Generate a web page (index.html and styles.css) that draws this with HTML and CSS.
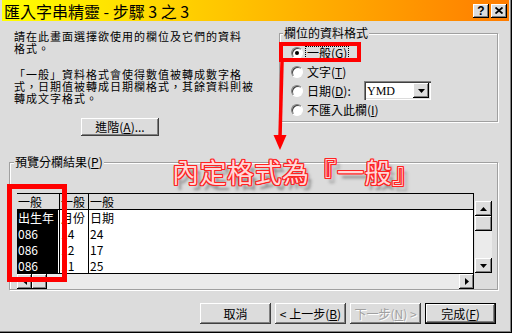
FILE: index.html
```html
<!DOCTYPE html>
<html lang="zh-Hant">
<head>
    <meta charset="UTF-8">
    <title>匯入字串精靈 - 步驟 3 之 3</title>
    <link rel="stylesheet" href="styles.css">
</head>
<body>
    <div class="window">
        <div class="titlebar">
            <span class="title">匯入字串精靈 - 步驟 3 之 3</span>
            <div class="title-buttons">
                <span class="tbtn help">?</span>
                <span class="tbtn">
                    <svg width="8" height="7" viewBox="0 0 8 7"><path d="M0.5 0.5 L7.5 6.5 M7.5 0.5 L0.5 6.5" stroke="#000" stroke-width="1.8"/></svg>
                </span>
            </div>
        </div>

        <div class="content">
            <div class="top">
                <div class="intro">
                    <p>請在此畫面選擇欲使用的欄位及它們的資料<br>格式。</p>
                    <p class="para">「一般」資料格式會使得數值被轉成數字格<br>式，日期值被轉成日期欄格式，其餘資料則被<br>轉成文字格式。</p>
                    <button class="btn advanced">進階(<u>A</u>)...</button>
                </div>

                <fieldset class="group format">
                    <legend>欄位的資料格式</legend>
                    <div class="radio-row">
                        <span class="radio checked"></span>
                        <span class="label focus">一般(<u>G</u>)</span>
                    </div>
                    <div class="radio-row">
                        <span class="radio"></span>
                        <span class="label">文字(<u>T</u>)</span>
                    </div>
                    <div class="radio-row">
                        <span class="radio"></span>
                        <span class="label date">日期(<u>D</u>):</span>
                        <div class="combo">
                            <span class="combo-text">YMD</span>
                            <span class="combo-btn">
                                <svg width="7" height="4" viewBox="0 0 7 4"><polygon points="0,0 7,0 3.5,4" fill="#000"/></svg>
                            </span>
                        </div>
                    </div>
                    <div class="radio-row">
                        <span class="radio"></span>
                        <span class="label">不匯入此欄(<u>I</u>)</span>
                    </div>
                </fieldset>
            </div>

            <fieldset class="group preview">
                <legend>預覽分欄結果(<u>P</u>)</legend>
                <div class="preview-box">
                    <div class="grid">
                        <div class="grid-head">
                            <div class="cell c1">一般</div>
                            <div class="cell c2">一般</div>
                            <div class="cell c3">一般</div>
                        </div>
                        <div class="grid-body">
                            <div class="row">
                                <div class="cell c1 sel">出生年</div>
                                <div class="cell c2">月份</div>
                                <div class="cell c3">日期</div>
                            </div>
                            <div class="row">
                                <div class="cell c1 sel">086</div>
                                <div class="cell c2">14</div>
                                <div class="cell c3">24</div>
                            </div>
                            <div class="row">
                                <div class="cell c1 sel">086</div>
                                <div class="cell c2">12</div>
                                <div class="cell c3">17</div>
                            </div>
                            <div class="row">
                                <div class="cell c1 sel">086</div>
                                <div class="cell c2">11</div>
                                <div class="cell c3">25</div>
                            </div>
                        </div>
                        <div class="hscroll">
                            <span class="sbtn hbtn">
                                <svg width="4" height="7" viewBox="0 0 4 7"><polygon points="4,0 4,7 0,3.5" fill="#000"/></svg>
                            </span>
                            <span class="sbtn hbtn"></span>
                            <span class="track"></span>
                            <span class="sbtn hbtn">
                                <svg width="4" height="7" viewBox="0 0 4 7"><polygon points="0,0 0,7 4,3.5" fill="#000"/></svg>
                            </span>
                        </div>
                    </div>
                    <div class="vscroll">
                        <span class="sbtn vbtn">
                            <svg width="7" height="4" viewBox="0 0 7 4"><polygon points="0,4 7,4 3.5,0" fill="#000"/></svg>
                        </span>
                        <span class="sbtn vbtn"></span>
                        <span class="track"></span>
                        <span class="sbtn vbtn">
                            <svg width="7" height="4" viewBox="0 0 7 4"><polygon points="0,0 7,0 3.5,4" fill="#000"/></svg>
                        </span>
                    </div>
                </div>
            </fieldset>

            <div class="actions">
                <button class="btn">取消</button>
                <button class="btn">&lt; 上一步(<u>B</u>)</button>
                <button class="btn disabled">下一步(<u>N</u>) &gt;</button>
                <button class="btn default">完成(<u>F</u>)</button>
            </div>
        </div>

        <!-- red annotation marks -->
        <svg class="marks" width="512" height="333" viewBox="0 0 512 333">
            <rect x="281" y="44" width="78" height="16" fill="none" stroke="#ff0000" stroke-width="4"/>
            <line x1="282" y1="62" x2="280" y2="137" stroke="#ff0000" stroke-width="3.5"/>
            <polygon points="273.5,135 286.5,135 280,150" fill="#ff0000"/>
            <rect x="9.5" y="186.5" width="55" height="93" fill="none" stroke="#ff0000" stroke-width="5"/>
        </svg>
        <div class="callout">內定格式為『一般』</div>
    </div>
</body>
</html>
```

FILE: styles.css
```css
* {
    margin: 0;
    padding: 0;
    box-sizing: border-box;
}

body {
    font-family: "Noto Sans CJK TC", "Liberation Sans", sans-serif;
    font-size: 12px;
    line-height: 12px;
    color: #000;
    background: #fff;
}

.window {
    position: relative;
    width: 512px;
    height: 333px;
    background: #dcdcdc;
    box-shadow: inset -1px -1px #000, inset -2px -2px #808080;
    overflow: hidden;
}

/* title bar */
.titlebar {
    display: flex;
    align-items: center;
    height: 21px;
    margin: 0 3px 0 2px;
    padding: 0 2px;
    background: linear-gradient(to right, #ffff00, #ff7c00);
}

.title {
    font-size: 16px;
    line-height: 16px;
}

.title-buttons {
    margin-left: auto;
    display: flex;
    gap: 2px;
}

.tbtn {
    width: 16px;
    height: 14px;
    display: flex;
    align-items: center;
    justify-content: center;
    background: #dcdcdc;
    box-shadow: inset -1px -1px #000, inset 1px 1px #fff, inset -2px -2px #808080;
}

.tbtn.help {
    font-family: "Liberation Sans", sans-serif;
    font-weight: bold;
    font-size: 12px;
}

/* main area */
.content {
    padding: 6px 14px 0 9px;
}

.top {
    display: flex;
    align-items: flex-start;
}

.intro {
    width: 270px;
    padding: 3px 0 0 5px;
}

.intro p {
    font-size: 11px;
    letter-spacing: 1px;
    line-height: 12px;
}

.intro .para {
    margin-top: 14px;
}

.btn {
    font: inherit;
    color: #000;
    width: 71px;
    height: 21px;
    border: none;
    background: #dcdcdc;
    box-shadow: inset -1px -1px #404040, inset 1px 1px #fff, inset -2px -2px #808080;
}

.btn.advanced {
    display: block;
    width: 78px;
    height: 18px;
    margin: 14px 0 0 67px;
}

.btn.default {
    border: 1px solid #000;
}

.btn.disabled {
    color: #a0a0a0;
    text-shadow: 1px 1px #fff;
}

/* group boxes */
.group {
    min-width: 0;
    padding: 0;
    border: 1px solid #a0a0a0;
    box-shadow: inset 1px 1px #fff, 1px 1px #fff;
}

.group legend {
    padding: 0 1px;
    background: #dcdcdc;
    line-height: 12px;
}

.format {
    flex: 1;
    padding: 4px 0 2px 0;
}

.format legend {
    margin-left: 3px;
}

.radio-row {
    display: flex;
    align-items: center;
    height: 19px;
    padding-left: 11px;
}

.radio {
    width: 12px;
    height: 12px;
    border-radius: 50%;
    background: #fff;
    border: 1px solid;
    border-color: #808080 #fff #fff #808080;
    box-shadow: inset 1px 1px #404040;
    display: flex;
    align-items: center;
    justify-content: center;
}

.radio.checked::after {
    content: "";
    width: 4px;
    height: 4px;
    border-radius: 50%;
    background: #000;
}

.label {
    margin-left: 4px;
}

.label.focus {
    margin-left: 2px;
    padding: 0 1px;
    border: 1px dotted #000;
    line-height: 11px;
}

.label.date {
    width: 57px;
}

.combo {
    display: flex;
    width: 67px;
    height: 19px;
    background: #fff;
    box-shadow: inset 1px 1px #808080, inset 2px 2px #404040, inset -1px -1px #fff, inset -2px -2px #dcdcdc;
}

.combo-text {
    flex: 1;
    padding: 4px 0 0 3px;
    font-family: "Liberation Serif", serif;
    font-size: 12px;
}

.combo-btn {
    width: 16px;
    height: 15px;
    margin: 2px 2px 2px 0;
    display: flex;
    align-items: center;
    justify-content: center;
    background: #dcdcdc;
    box-shadow: inset -1px -1px #000, inset 1px 1px #fff, inset -2px -2px #808080;
}

/* preview */
.preview {
    margin-top: 20px;
    padding-top: 25px;
}

.preview legend {
    margin-left: 4px;
}

.preview-box {
    display: flex;
    align-items: flex-start;
    margin-left: 7px;
}

.grid {
    width: 457px;
}

.grid-head {
    display: flex;
    height: 17px;
    border-top: 1px solid #000;
    border-bottom: 1px solid #000;
    border-right: 1px solid #000;
}

.grid-body {
    height: 64px;
    overflow: hidden;
    background: #fff;
    border-right: 1px solid #000;
    border-bottom: 1px solid #000;
}

.row {
    display: flex;
    height: 16px;
    align-items: center;
}

.cell {
    padding-left: 1px;
    white-space: nowrap;
}

.grid-head .cell {
    height: 15px;
    padding-top: 2px;
}

.c1 {
    width: 43px;
    border-right: 1px solid #000;
}

.c2 {
    width: 29px;
    border-right: 1px solid #000;
}

.c3 {
    flex: 1;
}

.cell.sel {
    height: 16px;
    padding-top: 2px;
    color: #fff;
    background: #000;
    box-shadow: inset -1px 0 #fff;
}

.row .c2,
.row .c3 {
    height: 16px;
    padding-top: 2px;
}

.hscroll {
    display: flex;
    height: 15px;
    background: #ebebeb;
}

.vscroll {
    display: flex;
    flex-direction: column;
    width: 17px;
    height: 72px;
    margin: 8px 0 0 1px;
    background: #ebebeb;
}

.sbtn {
    display: flex;
    align-items: center;
    justify-content: center;
    background: #dcdcdc;
    box-shadow: inset -1px -1px #000, inset 1px 1px #fff, inset -2px -2px #808080;
}

.hbtn {
    width: 15px;
    height: 15px;
}

.vbtn {
    width: 17px;
    height: 15px;
}

.track {
    flex: 1;
}

/* bottom buttons */
.actions {
    display: flex;
    justify-content: flex-end;
    gap: 4px;
    margin-top: 13px;
    padding-right: 2px;
}

/* annotation overlay */
.marks {
    position: absolute;
    left: 0;
    top: 0;
    pointer-events: none;
}

.callout {
    position: absolute;
    left: 172px;
    top: 158px;
    font-size: 27px;
    line-height: 27px;
    letter-spacing: 0.5px;
    white-space: nowrap;
    color: #ffd8d8;
    text-shadow:
        1px 0 #f22, -1px 0 #f22, 0 1px #f22, 0 -1px #f22,
        1px 1px #f22, -1px -1px #f22, 1px -1px #f22, -1px 1px #f22,
        4px 5px 3px rgba(70, 70, 70, 0.55);
}
```
